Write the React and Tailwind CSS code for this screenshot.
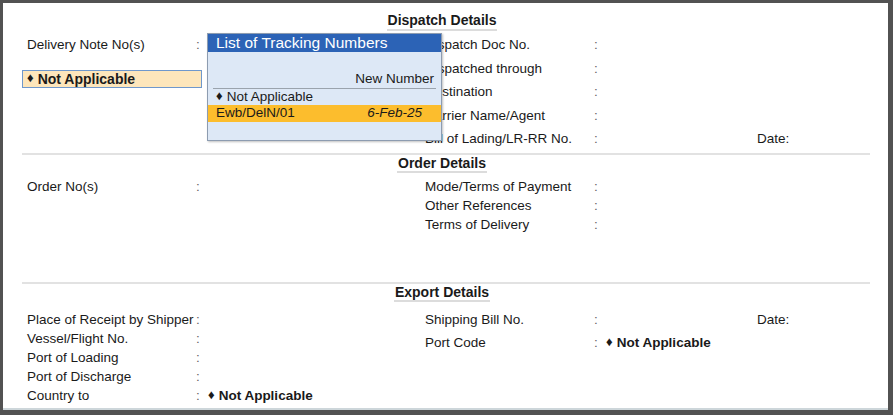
import React from 'react';

const Diamond = () => <span className="text-[13px] mr-[4px] relative top-[-1px]">♦</span>;

function Field({ label, value, date, h = 'h-[19px]', colonX = 'w-[170px]', bold }) {
  return (
    <div className={`flex items-center ${h} leading-[19px]`}>
      <span className={`${colonX} shrink-0 whitespace-nowrap`}>{label}</span>
      <span className="w-[11px] shrink-0 text-[#666] relative left-[-1px]">:</span>
      {value && (
        <span className={`whitespace-nowrap ${bold ? 'font-bold' : ''}`}>
          <Diamond />
          {value}
        </span>
      )}
      {date && <span className="ml-auto w-[113px] whitespace-nowrap">Date:</span>}
    </div>
  );
}

function SectionHead({ title, lh, mt }) {
  return (
    <div className={`flex justify-center pr-[8px] ${mt}`}>
      <span className={`font-bold text-[14px] ${lh} border-b-2 border-[#dcdcdc] px-[1px]`}>{title}</span>
    </div>
  );
}

export default function App() {
  return (
    <div className="w-[893px] h-[415px] bg-[#525252] pt-[3px] pl-[3px] font-['Liberation_Sans',Arial,sans-serif] text-[13.5px] text-[#1a1a1a]">
      <div className="relative w-[885px] h-[407px] bg-white border-b-2 border-[#cdd6da] pl-[19px] pr-[18px]">
        {/* Dispatch */}
        <SectionHead title="Dispatch Details" lh="leading-[18px]" mt="pt-[8px]" />
        <div className="flex mt-[2px]">
          <div className="w-[403px] shrink-0">
            <div className="pl-[5px]">
              <Field label="Delivery Note No(s)" h="h-[23.5px]" />
            </div>
            <div className="mt-[13px] w-[180px] h-[18px] bg-[#fde6bb] border border-[#6f98cc] pl-[4px] flex items-center font-bold text-[14px] leading-[16px]">
              <Diamond />
              Not Applicable
            </div>
          </div>
          <div className="flex-1">
            <Field label="Dispatch Doc No." h="h-[23.5px]" />
            <Field label="Dispatched through" h="h-[23.5px]" />
            <Field label="Destination" h="h-[23.5px]" />
            <Field label="Carrier Name/Agent" h="h-[23.5px]" />
            <Field label="Bill of Lading/LR-RR No." h="h-[23.5px]" date />
          </div>
        </div>
        <div className="mt-[2px] h-[2px] bg-[#e2e2e2]" />

        {/* Order */}
        <SectionHead title="Order Details" lh="leading-[16px]" mt="pt-0" />
        <div className="flex mt-[4px]">
          <div className="w-[403px] shrink-0 pl-[5px]">
            <Field label="Order No(s)" />
          </div>
          <div className="flex-1">
            <Field label="Mode/Terms of Payment" />
            <Field label="Other References" />
            <Field label="Terms of Delivery" />
          </div>
        </div>
        <div className="mt-[48px] h-[2px] bg-[#e2e2e2]" />

        {/* Export */}
        <SectionHead title="Export Details" lh="leading-[16px]" mt="pt-0" />
        <div className="flex mt-[8px]">
          <div className="w-[403px] shrink-0 pl-[5px]">
            <Field label="Place of Receipt by Shipper" />
            <Field label="Vessel/Flight No." />
            <Field label="Port of Loading" />
            <Field label="Port of Discharge" />
            <Field label="Country to" value="Not Applicable" bold />
          </div>
          <div className="flex-1">
            <Field label="Shipping Bill No." date />
            <div className="mt-[4px]">
              <Field label="Port Code" value="Not Applicable" bold />
            </div>
          </div>
        </div>

        {/* Tracking numbers popup */}
        <div className="absolute left-[204px] top-[30px] w-[235px] h-[108px] bg-[#dde8f6] border border-[#8d9cb0] shadow-[1px_1px_2px_rgba(0,0,0,0.25)]">
          <div className="h-[18px] bg-[#2c63b6] text-white text-[15.5px] leading-[18px] pl-[8px]">
            List of Tracking Numbers
          </div>
          <div className="pt-[19px] h-[36px] leading-[16px] text-right pr-[7px]">New Number</div>
          <div className="mx-[5px] h-px bg-[#9aa3ad]" />
          <div className="h-[16px] leading-[16px] pl-[8px] flex items-center">
            <Diamond />
            Not Applicable
          </div>
          <div className="h-[17px] bg-[#fcbd2d] flex items-center justify-between pl-[8px] pr-[19px]">
            <span>Ewb/DelN/01</span>
            <span className="italic">6-Feb-25</span>
          </div>
        </div>
      </div>
    </div>
  );
}
